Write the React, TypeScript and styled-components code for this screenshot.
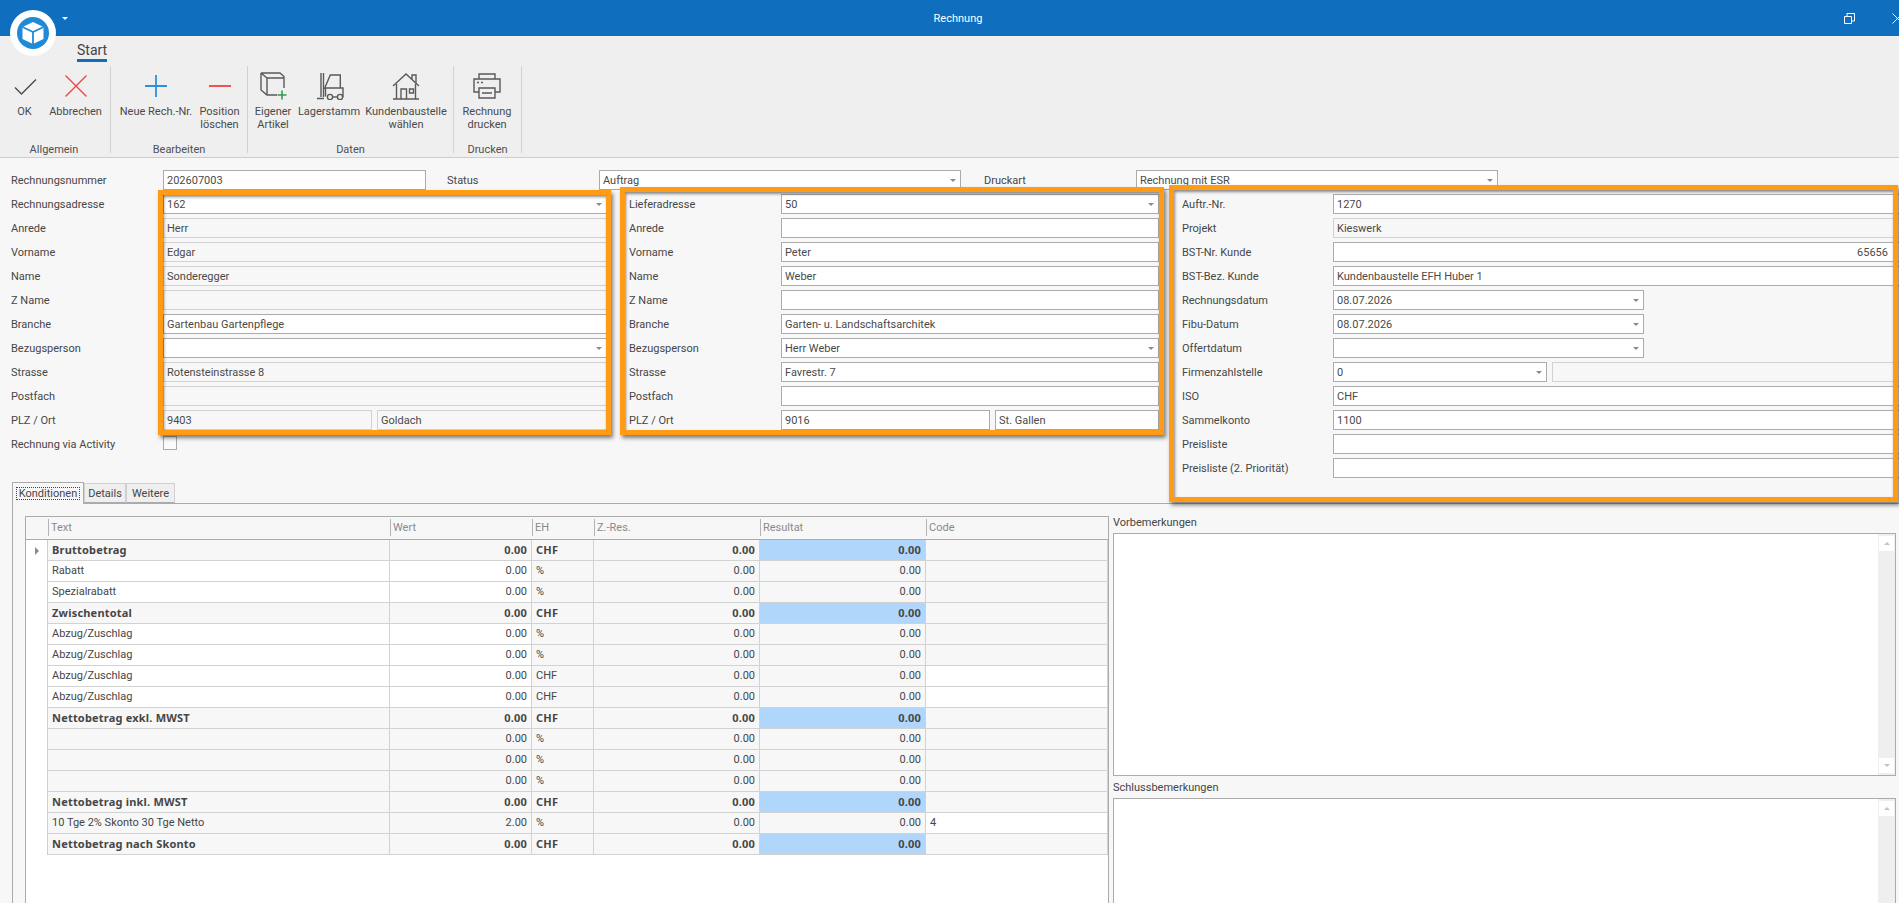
import { createGlobalStyle, styled } from "styled-components";

const GlobalStyle = createGlobalStyle`
  html, body {
    margin: 0;
    padding: 0;
    background: #f7f7f7;
    overflow: hidden;
  }
  * {
    box-sizing: border-box;
  }
`;

const FONT = `Roboto, "Liberation Sans", sans-serif`;

const Page = styled.div`
  position: relative;
  width: 1899px;
  height: 903px;
  overflow: hidden;
  display: flex;
  flex-direction: column;
  font-family: ${FONT};
  font-size: 11px;
  color: #464646;
  background: #f7f7f7;
`;

/* ---------- title bar ---------- */

const TitleBar = styled.div`
  height: 36px;
  flex: none;
  padding-left: 17px;
  display: flex;
  align-items: center;
  justify-content: center;
  background: #106ebe;
  color: #fff;
  font-size: 11px;
`;

const LogoBadge = styled.div`
  position: absolute;
  left: 10px;
  top: 10px;
  width: 46px;
  height: 46px;
  border-radius: 50%;
  background: #fff;
  display: flex;
  align-items: center;
  justify-content: center;
`;

const QuickCaret = styled.div`
  position: absolute;
  left: 62px;
  top: 17px;
  border-left: 3px solid transparent;
  border-right: 3px solid transparent;
  border-top: 3px solid #fff;
`;

const WindowIcon = styled.svg<{ $left: number }>`
  position: absolute;
  top: 13px;
  left: ${(p) => p.$left}px;
  width: 11px;
  height: 11px;
  fill: none;
  stroke: #fff;
`;

/* ---------- ribbon ---------- */

const Ribbon = styled.div`
  height: 122px;
  flex: none;
  background: #efefef;
  border-bottom: 1px solid #cdcdcd;
`;

const RibbonTabs = styled.div`
  height: 30px;
  padding-left: 77px;
`;

const RibbonTab = styled.div`
  display: inline-block;
  height: 26px;
  padding-top: 6px;
  font-size: 14px;
  line-height: 16px;
  color: #444;
  border-bottom: 3px solid #106ebe;
`;

const RibbonGroups = styled.div`
  display: flex;
  height: 87px;
`;

const RibbonGroup = styled.div<{ $width: number; $pad: number }>`
  width: ${(p) => p.$width}px;
  flex: none;
  padding-left: ${(p) => p.$pad}px;
  display: flex;
  flex-direction: column;
  border-right: 1px solid #d2d2d2;
`;

const GroupButtons = styled.div`
  display: flex;
  flex: 1;
`;

const GroupLabel = styled.div<{ $shift: number }>`
  height: 13px;
  line-height: 13px;
  margin: 0 0 -3px ${(p) => p.$shift}px;
  text-align: center;
  font-size: 11px;
  color: #505050;
`;

const RibbonButton = styled.div<{ $width: number }>`
  width: ${(p) => p.$width}px;
  flex: none;
  padding-top: 6px;
  display: flex;
  flex-direction: column;
  align-items: center;
  text-align: center;
  font-size: 11px;
  line-height: 13px;
  color: #4a4a4a;
`;

const ButtonIcon = styled.svg`
  width: 30px;
  height: 28px;
  margin-bottom: 5px;
  fill: none;
  stroke: #5a5a5a;
  stroke-width: 1.4;
`;

const IconCheck = () => (
  <ButtonIcon viewBox="0 0 30 28">
    <path d="M5 15.5 11.5 22 26 7.5" stroke="#4c4c4c" />
  </ButtonIcon>
);

const IconCross = () => (
  <ButtonIcon viewBox="0 0 30 28">
    <path d="M4.5 3.5 25.5 24.5M25.5 3.5 4.5 24.5" stroke="#e8484d" />
  </ButtonIcon>
);

const IconPlus = () => (
  <ButtonIcon viewBox="0 0 30 28">
    <path d="M15 3V25M4 14H26" stroke="#2f8fd8" strokeWidth="1.8" />
  </ButtonIcon>
);

const IconMinus = () => (
  <ButtonIcon viewBox="0 0 30 28">
    <path d="M4 14H26" stroke="#ef5350" strokeWidth="2" />
  </ButtonIcon>
);

const IconCubePlus = () => (
  <ButtonIcon viewBox="0 0 30 28">
    <path d="M3 1H22L26 4.5V16M3 1V18L9 23H19M3 1 9 6H26M9 6V23" />
    <path d="M24 18.5V27.5M19.5 23H28.5" stroke="#2e9e4f" strokeWidth="1.6" />
  </ButtonIcon>
);

const IconForklift = () => (
  <ButtonIcon viewBox="0 0 30 28">
    <path d="M7 1V25M9.5 1V25M3 26.5H10" />
    <path d="M10.3 17 16.3 3H26.3V15.5M11.5 24.5V16H29V24.5H28.5" />
    <circle cx="16" cy="25" r="2.6" />
    <circle cx="26" cy="25" r="2.6" />
    <path d="M18.6 25H23.4" />
  </ButtonIcon>
);

const IconHouse = () => (
  <ButtonIcon viewBox="0 0 30 28">
    <path d="M2 14 15 2 28 14M21 7V3H25V11" />
    <path d="M5.5 12V27H24.5V12M2 27H28" />
    <path d="M10 27V17H15.5V27M18.5 17H22.5V21H18.5Z" />
  </ButtonIcon>
);

const IconPrinter = () => (
  <ButtonIcon viewBox="0 0 30 28">
    <path d="M7 7V2H23V7" />
    <path d="M7 20H2V7H28V20H23" />
    <path d="M7 16H23V26H7ZM10 21H20" />
    <path d="M5 10.5H7M9 10.5H11" />
  </ButtonIcon>
);

/* ---------- form ---------- */

const FormArea = styled.div`
  flex: 1;
  min-height: 0;
  padding-top: 12px;
  display: flex;
  flex-direction: column;
`;

const FormRows = styled.div`
  padding-left: 11px;
`;

const TopFields = styled.div`
  display: flex;
  height: 20px;
  margin-bottom: 4px;
`;

const FormColumns = styled.div`
  display: flex;
  align-items: flex-start;
`;

const FormColumn = styled.div<{ $width: number; $gap: number }>`
  width: ${(p) => p.$width}px;
  flex: none;
  margin-right: ${(p) => p.$gap}px;
  display: flex;
  flex-direction: column;
  gap: 4px;
`;

const Field = styled.div<{ $label: number; $width?: number; $gap?: number }>`
  display: grid;
  grid-template-columns: ${(p) => p.$label}px 1fr;
  align-items: center;
  height: 20px;
  ${(p) => (p.$width ? `width: ${p.$width}px; flex: none;` : "")}
  ${(p) => (p.$gap ? `margin-right: ${p.$gap}px;` : "")}
`;

const FieldInputs = styled.div`
  display: flex;
  gap: 5px;
  min-width: 0;
`;

const FieldLabel = styled.div`
  white-space: nowrap;
`;

const InputBox = styled.div<{
  $readOnly?: boolean;
  $width?: number;
  $right?: boolean;
}>`
  position: relative;
  height: 20px;
  line-height: 19px;
  padding: 0 3px;
  white-space: nowrap;
  ${(p) => (p.$width ? `width: ${p.$width}px; flex: none;` : "flex: 1;")}
  text-align: ${(p) => (p.$right ? "right" : "left")};
  padding-right: ${(p) => (p.$right ? "13px" : "3px")};
  background: ${(p) => (p.$readOnly ? "#f7f7f7" : "#fff")};
  border: 1px solid ${(p) => (p.$readOnly ? "#d2d2d2" : "#ababab")};
  color: #4a4a4a;
`;

const DropCaret = styled.span`
  position: absolute;
  right: 4px;
  top: 8px;
  border-left: 3px solid transparent;
  border-right: 3px solid transparent;
  border-top: 3px solid #8a8a8a;
`;

const CheckBox = styled.div`
  width: 14px;
  height: 14px;
  margin-bottom: 2px;
  border: 1px solid #ababab;
  background: #fbfbfb;
`;

const Highlight = styled.div<{
  $x: number;
  $y: number;
  $w: number;
  $h: number;
}>`
  position: absolute;
  left: ${(p) => p.$x}px;
  top: ${(p) => p.$y}px;
  width: ${(p) => p.$w}px;
  height: ${(p) => p.$h}px;
  border: 5px solid #ff9b14;
  box-shadow:
    2px 3px 4px rgba(0, 0, 0, 0.5),
    inset 1px 2px 3px rgba(0, 0, 0, 0.45);
  pointer-events: none;
`;

/* ---------- tabs + grid ---------- */

const TabStrip = styled.div`
  margin: 4px 0 0 12px;
  height: 22px;
  flex: none;
  display: flex;
  align-items: flex-end;
  border-bottom: 1px solid #ababab;
`;

const Tab = styled.div<{ $active?: boolean; $width: number }>`
  width: ${(p) => p.$width}px;
  height: ${(p) => (p.$active ? 22 : 20)}px;
  margin-bottom: ${(p) => (p.$active ? -1 : 0)}px;
  padding: ${(p) => (p.$active ? "4px 3px" : "3px 0")};
  text-align: center;
  line-height: 13px;
  background: ${(p) => (p.$active ? "#f7f7f7" : "#efefef")};
  border: 1px solid ${(p) => (p.$active ? "#ababab" : "#d0d0d0")};
  border-bottom: ${(p) => (p.$active ? "none" : "1px solid #ababab")};
`;

const FocusText = styled.span`
  display: block;
  outline: 1px dotted #444;
  outline-offset: -1px;
`;

const TabPanel = styled.div`
  flex: 1;
  min-height: 0;
  margin-left: 12px;
  padding: 12px 3px 0 12px;
  display: flex;
  gap: 4px;
  border-left: 1px solid #ababab;
`;

const GridBox = styled.div`
  width: 1084px;
  flex: none;
  background: #fff;
  border: 1px solid #ababab;
  border-bottom: none;
`;

const COLUMNS = "22px 342px 142px 62px 166px 166px 1fr";

const HeaderRow = styled.div`
  display: grid;
  grid-template-columns: ${COLUMNS};
  height: 23px;
  background: #f7f7f7;
  border-bottom: 1px solid #ababab;
`;

const HeaderCell = styled.div<{ $first?: boolean }>`
  margin: 2px 0 3px;
  padding-left: 2px;
  line-height: 17px;
  color: #8a8a8a;
  border-left: 1px solid ${(p) => (p.$first ? "transparent" : "#b4b4b4")};
`;

const DataRow = styled.div`
  display: grid;
  grid-template-columns: ${COLUMNS};
  height: 21px;
`;

const Indicator = styled.div`
  background: #fff;
  border-right: 1px solid #cfcfcf;
  display: flex;
  align-items: center;
  justify-content: center;
`;

const RowMarker = styled.span`
  border-top: 4px solid transparent;
  border-bottom: 4px solid transparent;
  border-left: 4px solid #8a8a8a;
`;

const Cell = styled.div<{
  $bold?: boolean;
  $right?: boolean;
  $fill: string;
}>`
  padding: 0 4px;
  line-height: 20px;
  white-space: nowrap;
  text-align: ${(p) => (p.$right ? "right" : "left")};
  font-family: ${(p) => (p.$bold ? `"Noto Sans", ${FONT}` : FONT)};
  font-size: 11px;
  font-weight: ${(p) => (p.$bold ? 700 : 400)};
  letter-spacing: ${(p) => (p.$bold ? "0.2px" : "0")};
  background: ${(p) => p.$fill};
  border-right: 1px solid #d2d2d2;
  border-bottom: 1px solid #d2d2d2;
`;

/* ---------- memo fields ---------- */

const NotesColumn = styled.div`
  flex: 1;
  min-width: 0;
  display: flex;
  flex-direction: column;
`;

const NoteLabel = styled.div`
  height: 17px;
  line-height: 13px;
  flex: none;
`;

const Memo = styled.div<{ $height?: number }>`
  display: flex;
  justify-content: flex-end;
  background: #fff;
  border: 1px solid #ababab;
  ${(p) =>
    p.$height
      ? `height: ${p.$height}px; flex: none; margin-bottom: 5px;`
      : "flex: 1; border-bottom: none;"}
`;

const ScrollTrack = styled.div`
  width: 17px;
  padding: 2px 1px;
  background: #efefef;
  display: flex;
  flex-direction: column;
  justify-content: space-between;
`;

const ScrollButton = styled.div<{ $up?: boolean }>`
  width: 15px;
  height: 15px;
  background: #fff;
  display: flex;
  align-items: center;
  justify-content: center;
  &::after {
    content: "";
    border-left: 3px solid transparent;
    border-right: 3px solid transparent;
    ${(p) => (p.$up ? "border-bottom" : "border-top")}: 3px solid #c4c4c4;
  }
`;

/* ---------- data ---------- */

type Row = {
  label: string;
  value?: string;
  readOnly?: boolean;
  drop?: boolean;
  right?: boolean;
  width?: number;
};

const billing: Row[] = [
  { label: "Rechnungsadresse", value: "162", drop: true },
  { label: "Anrede", value: "Herr", readOnly: true },
  { label: "Vorname", value: "Edgar", readOnly: true },
  { label: "Name", value: "Sonderegger", readOnly: true },
  { label: "Z Name", readOnly: true },
  { label: "Branche", value: "Gartenbau Gartenpflege" },
  { label: "Bezugsperson", drop: true },
  { label: "Strasse", value: "Rotensteinstrasse 8", readOnly: true },
  { label: "Postfach", readOnly: true },
];

const delivery: Row[] = [
  { label: "Lieferadresse", value: "50", drop: true },
  { label: "Anrede" },
  { label: "Vorname", value: "Peter" },
  { label: "Name", value: "Weber" },
  { label: "Z Name" },
  { label: "Branche", value: "Garten- u. Landschaftsarchitek" },
  { label: "Bezugsperson", value: "Herr Weber", drop: true },
  { label: "Strasse", value: "Favrestr. 7" },
  { label: "Postfach" },
];

const order: Row[] = [
  { label: "Auftr.-Nr.", value: "1270" },
  { label: "Projekt", value: "Kieswerk", readOnly: true },
  { label: "BST-Nr. Kunde", value: "65656", right: true },
  { label: "BST-Bez. Kunde", value: "Kundenbaustelle EFH Huber 1" },
  { label: "Rechnungsdatum", value: "08.07.2026", drop: true, width: 311 },
  { label: "Fibu-Datum", value: "08.07.2026", drop: true, width: 311 },
  { label: "Offertdatum", drop: true, width: 311 },
];

const orderRest: Row[] = [
  { label: "ISO", value: "CHF" },
  { label: "Sammelkonto", value: "1100" },
  { label: "Preisliste" },
  { label: "Preisliste (2. Priorität)" },
];

type Line = {
  text?: string;
  value: string;
  unit: string;
  bold?: boolean;
  code?: string;
  whiteText?: boolean;
  whiteCode?: boolean;
};

const lines: Line[] = [
  { text: "Bruttobetrag", value: "0.00", unit: "CHF", bold: true },
  { text: "Rabatt", value: "0.00", unit: "%", whiteText: true },
  { text: "Spezialrabatt", value: "0.00", unit: "%", whiteText: true },
  { text: "Zwischentotal", value: "0.00", unit: "CHF", bold: true },
  { text: "Abzug/Zuschlag", value: "0.00", unit: "%", whiteText: true },
  { text: "Abzug/Zuschlag", value: "0.00", unit: "%", whiteText: true },
  {
    text: "Abzug/Zuschlag",
    value: "0.00",
    unit: "CHF",
    whiteText: true,
    whiteCode: true,
  },
  {
    text: "Abzug/Zuschlag",
    value: "0.00",
    unit: "CHF",
    whiteText: true,
    whiteCode: true,
  },
  { text: "Nettobetrag exkl. MWST", value: "0.00", unit: "CHF", bold: true },
  { value: "0.00", unit: "%" },
  { value: "0.00", unit: "%" },
  { value: "0.00", unit: "%" },
  { text: "Nettobetrag inkl. MWST", value: "0.00", unit: "CHF", bold: true },
  {
    text: "10 Tge 2% Skonto 30 Tge Netto",
    value: "2.00",
    unit: "%",
    code: "4",
    whiteCode: true,
  },
  { text: "Nettobetrag nach Skonto", value: "0.00", unit: "CHF", bold: true },
];

const GREY = "#f7f7f7";
const WHITE = "#fff";
const BLUE = "#b0d6fc";

const FormRow = ({ row, label = 152 }: { row: Row; label?: number }) => (
  <Field $label={label}>
    <FieldLabel>{row.label}</FieldLabel>
    <FieldInputs>
      <InputBox $readOnly={row.readOnly} $right={row.right} $width={row.width}>
        {row.value}
        {row.drop && <DropCaret />}
      </InputBox>
    </FieldInputs>
  </Field>
);

const ribbon = (
  <Ribbon>
    <RibbonTabs>
      <RibbonTab>Start</RibbonTab>
    </RibbonTabs>
    <RibbonGroups>
      <RibbonGroup $width={111} $pad={0}>
        <GroupButtons>
          <RibbonButton $width={49}>
            <IconCheck />
            OK
          </RibbonButton>
          <RibbonButton $width={53}>
            <IconCross />
            Abbrechen
          </RibbonButton>
        </GroupButtons>
        <GroupLabel $shift={-2}>Allgemein</GroupLabel>
      </RibbonGroup>
      <RibbonGroup $width={137} $pad={6}>
        <GroupButtons>
          <RibbonButton $width={78}>
            <IconPlus />
            Neue Rech.-Nr.
          </RibbonButton>
          <RibbonButton $width={49}>
            <IconMinus />
            Position
            <br />
            löschen
          </RibbonButton>
        </GroupButtons>
        <GroupLabel $shift={-6}>Bearbeiten</GroupLabel>
      </RibbonGroup>
      <RibbonGroup $width={206} $pad={6}>
        <GroupButtons>
          <RibbonButton $width={38}>
            <IconCubePlus />
            Eigener
            <br />
            Artikel
          </RibbonButton>
          <RibbonButton $width={74}>
            <IconForklift />
            Lagerstamm
          </RibbonButton>
          <RibbonButton $width={80}>
            <IconHouse />
            Kundenbaustelle
            <br />
            wählen
          </RibbonButton>
        </GroupButtons>
        <GroupLabel $shift={-6}>Daten</GroupLabel>
      </RibbonGroup>
      <RibbonGroup $width={68} $pad={9}>
        <GroupButtons>
          <RibbonButton $width={48}>
            <IconPrinter />
            Rechnung
            <br />
            drucken
          </RibbonButton>
        </GroupButtons>
        <GroupLabel $shift={-9}>Drucken</GroupLabel>
      </RibbonGroup>
    </RibbonGroups>
  </Ribbon>
);

const App = () => {
  return (
    <Page>
      <GlobalStyle />
      <TitleBar>Rechnung</TitleBar>
      {ribbon}

      <FormArea>
        <FormRows>
          <TopFields>
            <Field $label={152} $width={415} $gap={21}>
              <FieldLabel>Rechnungsnummer</FieldLabel>
              <InputBox>202607003</InputBox>
            </Field>
            <Field $label={152} $width={514} $gap={23}>
              <FieldLabel>Status</FieldLabel>
              <InputBox>
                Auftrag
                <DropCaret />
              </InputBox>
            </Field>
            <Field $label={152} $width={514}>
              <FieldLabel>Druckart</FieldLabel>
              <InputBox>
                Rechnung mit ESR
                <DropCaret />
              </InputBox>
            </Field>
          </TopFields>

          <FormColumns>
            <FormColumn $width={596} $gap={22}>
              {billing.map((row) => (
                <FormRow key={row.label} row={row} />
              ))}
              <Field $label={152}>
                <FieldLabel>PLZ / Ort</FieldLabel>
                <FieldInputs>
                  <InputBox $readOnly $width={209}>
                    9403
                  </InputBox>
                  <InputBox $readOnly>Goldach</InputBox>
                </FieldInputs>
              </Field>
              <Field $label={152}>
                <FieldLabel>Rechnung via Activity</FieldLabel>
                <CheckBox />
              </Field>
            </FormColumn>

            <FormColumn $width={530} $gap={23}>
              {delivery.map((row) => (
                <FormRow key={row.label} row={row} />
              ))}
              <Field $label={152}>
                <FieldLabel>PLZ / Ort</FieldLabel>
                <FieldInputs>
                  <InputBox $width={209}>9016</InputBox>
                  <InputBox>St. Gallen</InputBox>
                </FieldInputs>
              </Field>
            </FormColumn>

            <FormColumn $width={720} $gap={0}>
              {order.map((row) => (
                <FormRow key={row.label} row={row} label={151} />
              ))}
              <Field $label={151}>
                <FieldLabel>Firmenzahlstelle</FieldLabel>
                <FieldInputs>
                  <InputBox $width={214}>
                    0
                    <DropCaret />
                  </InputBox>
                  <InputBox $readOnly />
                </FieldInputs>
              </Field>
              {orderRest.map((row) => (
                <FormRow key={row.label} row={row} label={151} />
              ))}
            </FormColumn>
          </FormColumns>
        </FormRows>

        <TabStrip>
          <Tab $active $width={72}>
            <FocusText>Konditionen</FocusText>
          </Tab>
          <Tab $width={42}>Details</Tab>
          <Tab $width={49}>Weitere</Tab>
        </TabStrip>

        <TabPanel>
          <GridBox>
            <HeaderRow>
              <HeaderCell $first />
              <HeaderCell>Text</HeaderCell>
              <HeaderCell>Wert</HeaderCell>
              <HeaderCell>EH</HeaderCell>
              <HeaderCell>Z.-Res.</HeaderCell>
              <HeaderCell>Resultat</HeaderCell>
              <HeaderCell>Code</HeaderCell>
            </HeaderRow>
            {lines.map((line, i) => (
              <DataRow key={i}>
                <Indicator>{i === 0 && <RowMarker />}</Indicator>
                <Cell $bold={line.bold} $fill={line.whiteText ? WHITE : GREY}>
                  {line.text}
                </Cell>
                <Cell
                  $bold={line.bold}
                  $right
                  $fill={line.whiteText ? WHITE : GREY}
                >
                  {line.value}
                </Cell>
                <Cell $bold={line.bold} $fill={GREY}>
                  {line.unit}
                </Cell>
                <Cell $bold={line.bold} $right $fill={GREY}>
                  0.00
                </Cell>
                <Cell $bold={line.bold} $right $fill={line.bold ? BLUE : GREY}>
                  0.00
                </Cell>
                <Cell $fill={line.whiteCode ? WHITE : GREY}>{line.code}</Cell>
              </DataRow>
            ))}
          </GridBox>

          <NotesColumn>
            <NoteLabel>Vorbemerkungen</NoteLabel>
            <Memo $height={243}>
              <ScrollTrack>
                <ScrollButton $up />
                <ScrollButton />
              </ScrollTrack>
            </Memo>
            <NoteLabel>Schlussbemerkungen</NoteLabel>
            <Memo>
              <ScrollTrack>
                <ScrollButton $up />
              </ScrollTrack>
            </Memo>
          </NotesColumn>
        </TabPanel>
      </FormArea>

      <LogoBadge>
        <svg width="32" height="32" viewBox="0 0 32 32">
          <circle cx="16" cy="16" r="16" fill="#1f8ad6" />
          <path d="M16 5 26.5 10V22L16 27 5.5 22V10Z" fill="#fff" />
          <path
            d="M5.5 10 16 15 26.5 10M16 15V27"
            fill="none"
            stroke="#1f8ad6"
            strokeWidth="1.8"
          />
        </svg>
      </LogoBadge>
      <QuickCaret />
      <WindowIcon viewBox="0 0 11 11" $left={1844}>
        <path d="M.5 3.5H7.5V10.5H.5ZM3 3V.5H10.5V8H8" />
      </WindowIcon>
      <WindowIcon viewBox="0 0 11 11" $left={1892}>
        <path d="M.5.5 10.5 10.5M10.5.5.5 10.5" />
      </WindowIcon>

      <Highlight $x={158} $y={190} $w={453} $h={245} />
      <Highlight $x={620} $y={187} $w={544} $h={248} />
      <Highlight $x={1169} $y={185} $w={729} $h={317} />
    </Page>
  );
};

export default App;
